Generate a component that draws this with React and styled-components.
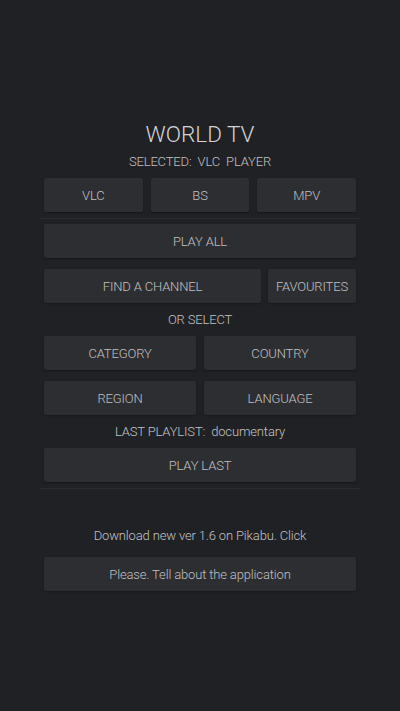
import React from 'react';
import styled, { createGlobalStyle } from 'styled-components';

const FONT = '"Roboto Light", Roboto, "Liberation Sans", sans-serif';

const GlobalStyle = createGlobalStyle`
  html, body {
    margin: 0;
    padding: 0;
    background: #202124;
  }
  body {
    font-family: ${FONT};
    font-weight: 300;
    color: #c4c4c6;
  }
`;

const Page = styled.div`
  min-height: 711px;
  box-sizing: border-box;
  padding: 122px 44px 0 44px;
  display: flex;
  flex-direction: column;
`;

const Title = styled.h1`
  margin: 0;
  font-size: 22.5px;
  line-height: 24px;
  font-weight: 300;
  text-align: center;
  color: #d4d4d6;
`;

const Caption = styled.div`
  margin-top: ${props => props.top || 8}px;
  font-size: 13px;
  line-height: 16px;
  letter-spacing: -0.15px;
  text-align: center;
  color: #c2c2c4;
  white-space: pre;
`;

const Row = styled.div`
  display: flex;
  gap: ${props => props.gap || 8}px;
  margin-top: ${props => props.top || 0}px;
`;

const Button = styled.button`
  flex: ${props => props.fixed ? `0 0 ${props.fixed}px` : '1 1 0'};
  height: 34px;
  margin-top: ${props => props.top || 0}px;
  padding: 0;
  border: none;
  border-radius: 2px;
  background: #2d2e32;
  box-shadow: 0 1px 2px rgba(0, 0, 0, 0.35);
  font-family: ${FONT};
  font-weight: 300;
  font-size: 13px;
  letter-spacing: -0.15px;
  color: #c0c0c2;
  cursor: pointer;
`;

const WideButton = styled(Button)`
  width: 100%;
  flex: none;
`;

const Divider = styled.div`
  height: 1px;
  margin: ${props => props.top || 6}px -4px 0 -4px;
  background: #2b2c30;
`;

export default function App() {
  return (
    <>
      <GlobalStyle />
      <Page>
        <Title>WORLD TV</Title>
        <Caption top={8}>SELECTED:  VLC  PLAYER</Caption>

        <Row top={8}>
          <Button>VLC</Button>
          <Button>BS</Button>
          <Button>MPV</Button>
        </Row>
        <Divider top={6} />

        <WideButton top={5}>PLAY ALL</WideButton>

        <Row top={11} gap={7}>
          <Button>FIND A CHANNEL</Button>
          <Button fixed={88}>FAVOURITES</Button>
        </Row>

        <Caption top={9}>OR SELECT</Caption>

        <Row top={8} gap={8}>
          <Button>CATEGORY</Button>
          <Button>COUNTRY</Button>
        </Row>
        <Row top={11} gap={8}>
          <Button>REGION</Button>
          <Button>LANGUAGE</Button>
        </Row>

        <Caption top={9}>LAST PLAYLIST:  documentary</Caption>

        <WideButton top={8}>PLAY LAST</WideButton>
        <Divider top={6} />

        <Caption top={39}>Download new ver 1.6 on Pikabu. Click</Caption>

        <WideButton top={13}>Please. Tell about the application</WideButton>
      </Page>
    </>
  );
}
